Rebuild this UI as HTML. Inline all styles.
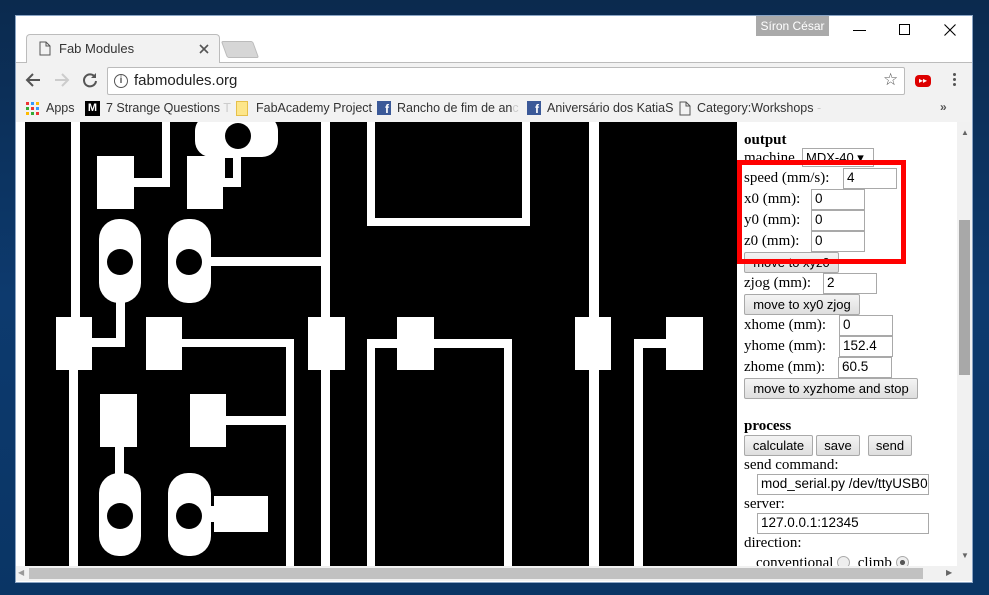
<!DOCTYPE html>
<html><head><meta charset="utf-8"><style>
*{margin:0;padding:0;box-sizing:border-box}
body{width:989px;height:595px;overflow:hidden;position:relative;background:linear-gradient(180deg,#0b2a4e 0%,#0d3a6e 50%,#0a3565 100%);font-family:"Liberation Sans",sans-serif}
.a{position:absolute}
.w{background:#fff}
.lbl{position:absolute;font-family:"Liberation Serif",serif;font-size:15px;color:#000;white-space:nowrap;line-height:18px}
.in{position:absolute;border:1px solid #a9a9a9;background:#fff;font-size:13.5px;padding-left:3px;line-height:18px;height:21px;color:#000;white-space:nowrap;overflow:hidden}
.bt{position:absolute;border:1px solid #a9a9a9;background:linear-gradient(#f4f4f4,#dedede);font-size:13px;line-height:19px;height:21px;text-align:center;border-radius:2px;color:#000;white-space:nowrap}
.bm{position:absolute;top:101px;font-size:12.5px;color:#333;white-space:nowrap}
</style></head><body>
<div class="a" style="left:15px;top:15px;width:958px;height:568px;background:#fff;border:1px solid #8aa4c4"></div>
<div class="a" style="left:16px;top:62px;width:956px;height:60px;background:#f2f2f2;border-top:1px solid #bcbcbc"></div>
<div class="a" style="left:26px;top:34px;width:194px;height:29px;background:#f2f2f2;border:1px solid #bcbcbc;border-bottom:none;border-radius:4px 4px 0 0"></div>
<div class="a" style="left:224px;top:41px;width:32px;height:17px;background:#d6d6d6;border:1px solid #bbb;transform:skewX(20deg);border-radius:2px"></div>
<svg class="a" style="left:39px;top:41px" width="12" height="15"><path d="M1 1h6l4 4v9H1z M7 1v4h4" fill="none" stroke="#555"/></svg>
<div class="a" style="left:59px;top:41px;font-size:13px;color:#333">Fab Modules</div>
<svg class="a" style="left:199px;top:44px" width="10" height="10"><path d="M1 1L9 9M9 1L1 9" stroke="#555" stroke-width="1.6"/></svg>
<div class="a" style="left:756px;top:16px;width:73px;height:20px;background:#aaa;color:#fff;font-size:12px;text-align:center;line-height:20px">Síron César</div>
<div class="a" style="left:853px;top:30px;width:13px;height:1px;background:#000"></div>
<div class="a" style="left:899px;top:24px;width:11px;height:11px;border:1px solid #000"></div>
<svg class="a" style="left:944px;top:24px" width="12" height="12"><path d="M0.5 0.5L11.5 11.5M11.5 0.5L0.5 11.5" stroke="#000" stroke-width="1.1"/></svg>
<svg class="a" style="left:24px;top:72px" width="18" height="16"><path d="M16 8H3M9 2L3 8l6 6" fill="none" stroke="#555" stroke-width="2"/></svg>
<svg class="a" style="left:53px;top:72px" width="18" height="16"><path d="M2 8h13M9 2l6 6-6 6" fill="none" stroke="#ccc" stroke-width="2"/></svg>
<svg class="a" style="left:81px;top:71px" width="18" height="18"><path d="M14 6A6 6 0 1 0 15 10" fill="none" stroke="#555" stroke-width="2"/><path d="M15 2v5h-5z" fill="#555"/></svg>
<div class="a" style="left:107px;top:67px;width:798px;height:28px;background:#fff;border:1px solid #bbb;border-radius:2px"></div>
<div class="a" style="left:114px;top:74px;width:14px;height:14px;border:1.5px solid #555;border-radius:50%;font-size:10px;text-align:center;line-height:11px;color:#555;font-weight:bold">i</div>
<div class="a" style="left:134px;top:72px;font-size:15px;color:#222">fabmodules.org</div>
<div class="a" style="left:883px;top:70px;font-size:17px;color:#555">☆</div>
<div class="a" style="left:915px;top:75px;width:16px;height:12px;background:#d00;border-radius:4px;color:#fff;font-size:8px;text-align:center;line-height:12px">▸▸</div>
<div class="a" style="left:953px;top:73px;width:3px;height:3px;background:#555;box-shadow:0 5px #555,0 10px #555;border-radius:50%"></div>
<svg class="a" style="left:26px;top:102px" width="13" height="13"><g><rect x="0" y="0" width="3" height="3" fill="#e33"/><rect x="5" y="0" width="3" height="3" fill="#39f"/><rect x="10" y="0" width="3" height="3" fill="#fb0"/><rect x="0" y="5" width="3" height="3" fill="#3a3"/><rect x="5" y="5" width="3" height="3" fill="#e33"/><rect x="10" y="5" width="3" height="3" fill="#39f"/><rect x="0" y="10" width="3" height="3" fill="#fb0"/><rect x="5" y="10" width="3" height="3" fill="#3a3"/><rect x="10" y="10" width="3" height="3" fill="#e33"/></g></svg>
<div class="bm" style="left:46px">Apps</div>
<div class="a" style="left:85px;top:101px;width:15px;height:15px;background:#000;color:#fff;font-size:11px;font-weight:bold;text-align:center;line-height:15px">M</div>
<div class="bm" style="left:106px">7 Strange Questions <span style="color:#ccc">T</span></div>
<div class="a" style="left:236px;top:101px;width:12px;height:15px;background:#fde68a;border:1px solid #e6c04a"></div>
<div class="bm" style="left:256px">FabAcademy Project</div>
<div class="a" style="left:377px;top:101px;width:14px;height:14px;background:#3b5998;color:#fff;font-size:12px;font-weight:bold;text-align:right;line-height:16px;padding-right:2px">f</div>
<div class="bm" style="left:397px">Rancho de fim de an<span style="color:#ccc">c</span></div>
<div class="a" style="left:527px;top:101px;width:14px;height:14px;background:#3b5998;color:#fff;font-size:12px;font-weight:bold;text-align:right;line-height:16px;padding-right:2px">f</div>
<div class="bm" style="left:547px">Aniversário dos KatiaS</div>
<svg class="a" style="left:679px;top:101px" width="12" height="15"><path d="M1 1h6l4 4v9H1z M7 1v4h4" fill="none" stroke="#555"/></svg>
<div class="bm" style="left:697px">Category:Workshops <span style="color:#ccc">-</span></div>
<div class="a" style="left:940px;top:100px;font-size:12px;color:#555;font-weight:bold">»</div>
<svg class="a" style="left:25px;top:122px" width="712" height="444" viewBox="25 122 712 444">
<rect x="25" y="122" width="712" height="444" fill="#000"/>
<g fill="#fff">
<rect x="71" y="122" width="9" height="196"/>
<rect x="162" y="122" width="8" height="65"/><rect x="134" y="178" width="36" height="9"/>
<rect x="97" y="156" width="37" height="53"/>
<rect x="187" y="156" width="36" height="53"/>
<rect x="223" y="157" width="18" height="30"/>
<rect x="195" y="115" width="83" height="42" rx="16"/>
<rect x="99" y="219" width="42" height="84" rx="20"/>
<rect x="168" y="219" width="43" height="84" rx="20"/>
<rect x="205" y="257" width="125" height="9"/>
<rect x="321" y="122" width="9" height="444"/>
<rect x="308" y="317" width="37" height="53"/>
<rect x="116" y="300" width="9" height="47"/><rect x="88" y="338" width="37" height="9"/>
<rect x="56" y="317" width="36" height="53"/>
<rect x="69" y="365" width="9" height="201"/>
<rect x="146" y="317" width="36" height="53"/>
<rect x="180" y="339" width="113" height="8"/><rect x="286" y="339" width="8" height="227"/>
<rect x="100" y="394" width="37" height="53"/>
<rect x="115" y="445" width="9" height="30"/>
<rect x="190" y="394" width="36" height="53"/>
<rect x="224" y="416" width="66" height="9"/>
<rect x="99" y="473" width="42" height="83" rx="20"/>
<rect x="168" y="473" width="43" height="83" rx="20"/>
<rect x="214" y="496" width="54" height="36"/><rect x="209" y="506" width="7" height="16"/>
<rect x="367" y="122" width="8" height="104"/><rect x="367" y="218" width="163" height="8"/><rect x="522" y="122" width="8" height="104"/>
<rect x="397" y="317" width="37" height="53"/>
<rect x="367" y="339" width="32" height="9"/><rect x="367" y="339" width="8" height="227"/>
<rect x="432" y="339" width="80" height="9"/><rect x="504" y="339" width="8" height="227"/>
<rect x="589" y="122" width="10" height="444"/>
<rect x="575" y="317" width="36" height="53"/>
<rect x="666" y="317" width="37" height="53"/>
<rect x="634" y="339" width="34" height="9"/><rect x="634" y="339" width="9" height="227"/>
</g>
<g fill="#000">
<rect x="225" y="158" width="8" height="20"/>
<ellipse cx="238" cy="136" rx="13" ry="13"/>
<ellipse cx="120" cy="262" rx="13" ry="13"/><ellipse cx="189" cy="262" rx="13" ry="13"/>
<ellipse cx="120" cy="516" rx="13" ry="13"/><ellipse cx="189" cy="516" rx="13" ry="13"/>
</g>
</svg>
<div class="a w" style="left:737px;top:122px;width:220px;height:444px;overflow:hidden">
<div style="position:absolute;left:-737px;top:-122px;width:989px;height:595px">
<div class="lbl" style="left:744px;top:131px;font-weight:bold">output</div>
<div class="lbl" style="left:744px;top:149px">machine</div>
<div class="in" style="left:802px;top:148px;width:72px;height:19px;line-height:17px;font-size:13px">MDX-40 ▾</div>
<div class="lbl" style="left:744px;top:169px">speed (mm/s):</div>
<div class="in" style="left:843px;top:168px;width:54px">4</div>
<div class="lbl" style="left:744px;top:190px">x0 (mm):</div>
<div class="in" style="left:811px;top:189px;width:54px">0</div>
<div class="lbl" style="left:744px;top:211px">y0 (mm):</div>
<div class="in" style="left:811px;top:210px;width:54px">0</div>
<div class="lbl" style="left:744px;top:232px">z0 (mm):</div>
<div class="in" style="left:811px;top:231px;width:54px">0</div>
<div class="bt" style="left:744px;top:252px;width:95px">move to xyz0</div>
<div class="lbl" style="left:744px;top:274px">zjog (mm):</div>
<div class="in" style="left:823px;top:273px;width:54px">2</div>
<div class="bt" style="left:744px;top:294px;width:116px">move to xy0 zjog</div>
<div class="lbl" style="left:744px;top:316px">xhome (mm):</div>
<div class="in" style="left:839px;top:315px;width:54px">0</div>
<div class="lbl" style="left:744px;top:337px">yhome (mm):</div>
<div class="in" style="left:839px;top:336px;width:54px">152.4</div>
<div class="lbl" style="left:744px;top:358px">zhome (mm):</div>
<div class="in" style="left:838px;top:357px;width:54px">60.5</div>
<div class="bt" style="left:744px;top:378px;width:174px">move to xyzhome and stop</div>
<div class="lbl" style="left:744px;top:417px;font-weight:bold">process</div>
<div class="bt" style="left:744px;top:435px;width:69px">calculate</div>
<div class="bt" style="left:816px;top:435px;width:44px">save</div>
<div class="bt" style="left:868px;top:435px;width:44px">send</div>
<div class="lbl" style="left:744px;top:456px">send command:</div>
<div class="in" style="left:757px;top:474px;width:172px">mod_serial.py /dev/ttyUSB0 9</div>
<div class="lbl" style="left:744px;top:495px">server:</div>
<div class="in" style="left:757px;top:513px;width:172px">127.0.0.1:12345</div>
<div class="lbl" style="left:744px;top:534px">direction:</div>
<div class="lbl" style="left:756px;top:554px">conventional <span style="display:inline-block;width:13px;height:13px;border:1px solid #aaa;border-radius:50%;vertical-align:-2px;background:#eee"></span> &nbsp;climb <span style="display:inline-block;width:13px;height:13px;border:1px solid #aaa;border-radius:50%;vertical-align:-2px;background:radial-gradient(#555 30%,#eee 35%)"></span></div>
</div></div>
<div class="a" style="left:737px;top:160px;width:169px;height:104px;border:5px solid #f00"></div>
<div class="a" style="left:957px;top:122px;width:15px;height:444px;background:#f1f1f1"></div>
<div class="a" style="left:959px;top:220px;width:11px;height:155px;background:#a8a8a8"></div>
<div class="a" style="left:961px;top:128px;font-size:8px;color:#666">▲</div>
<div class="a" style="left:961px;top:551px;font-size:8px;color:#666">▼</div>
<div class="a" style="left:16px;top:566px;width:956px;height:15px;background:#f1f1f1"></div>
<div class="a" style="left:29px;top:568px;width:894px;height:11px;background:#c1c1c1"></div>
<div class="a" style="left:18px;top:568px;font-size:8px;color:#999">◀</div>
<div class="a" style="left:946px;top:568px;font-size:8px;color:#666">▶</div>
</body></html>
